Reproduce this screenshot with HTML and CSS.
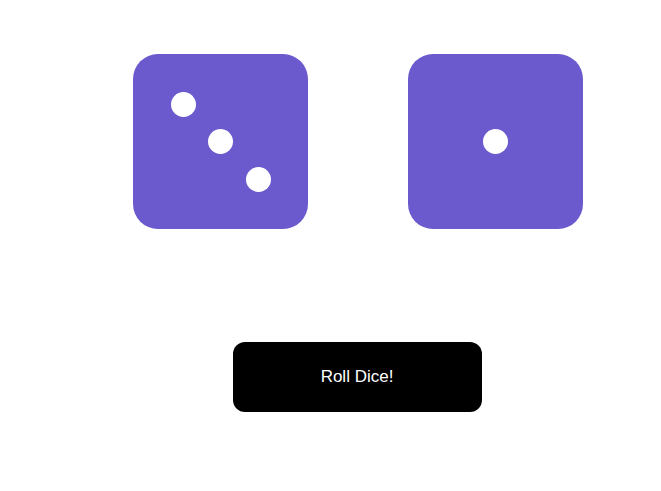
FILE: index.html
```html
<!DOCTYPE html>
<html>
<head>
<meta charset="utf-8">
<link rel="stylesheet" href="styles.css">
</head>
<body>
<main class="app">
  <div class="dice-row">
    <div class="die">
      <span class="pip p1"></span>
      <span class="pip p5"></span>
      <span class="pip p9"></span>
    </div>
    <div class="die">
      <span class="pip p5"></span>
    </div>
  </div>
  <button class="roll">Roll Dice!</button>
</main>
</body>
</html>
```
FILE: styles.css
```css
html, body {
  margin: 0;
  padding: 0;
  background: #fff;
}
.app {
  display: flex;
  flex-direction: column;
  align-items: center;
  padding: 54px 0 0 55px;
  font-family: "Liberation Sans", Arial, sans-serif;
}
.dice-row {
  display: flex;
  gap: 100px;
}
.die {
  width: 175px;
  height: 175px;
  box-sizing: border-box;
  background: #6a5acd;
  border-radius: 25px;
  padding: 31.25px;
  display: grid;
  grid-template-columns: repeat(3, 37.5px);
  grid-template-rows: repeat(3, 37.5px);
  place-items: center;
}
.pip {
  width: 25px;
  height: 25px;
  border-radius: 50%;
  background: #fff;
}
.p1 { grid-area: 1 / 1; }
.p5 { grid-area: 2 / 2; }
.p9 { grid-area: 3 / 3; }
.roll {
  margin: 113px 2px 0 0;
  width: 249px;
  height: 70px;
  background: #000;
  color: #fff;
  border: none;
  border-radius: 12px;
  font-family: "Liberation Sans", Arial, sans-serif;
  font-size: 17px;
  padding: 0;
}
```
